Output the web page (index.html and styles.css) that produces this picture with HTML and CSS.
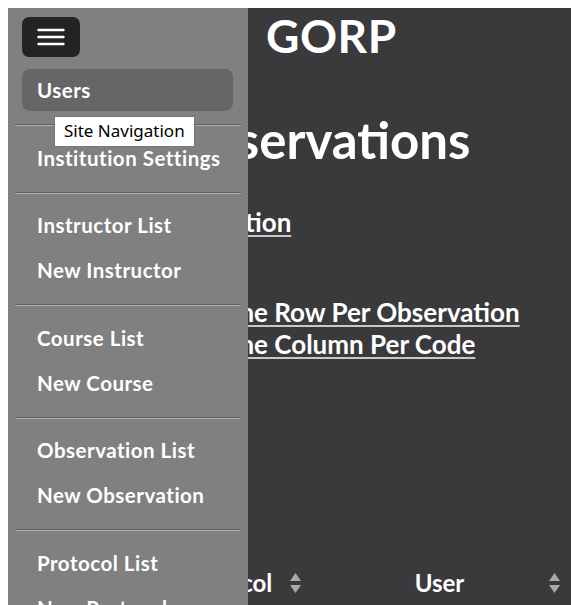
FILE: index.html
```html
<!DOCTYPE html>
<html lang="en">
<head>
<meta charset="utf-8">
<title>GORP - Observations</title>
<link rel="stylesheet" href="styles.css">
</head>
<body>
<div class="page">
  <header class="topbar">
    <span class="brand">GORP</span>
  </header>

  <main class="content">
    <h1 class="page-title">Observations</h1>
    <p class="new-link"><a href="#">New Observation</a></p>
    <ul class="exports">
      <li><a href="#">Export: One Row Per Observation</a></li>
      <li><a href="#">Export: One Column Per Code</a></li>
    </ul>
    <table class="obs-table">
      <thead>
        <tr>
          <th class="col-date">Date</th>
          <th class="col-protocol">Protocol <svg class="sort-icon" viewBox="0 0 11 20" width="11" height="20"><path d="M5.5 0L11 8H0Z"/><path d="M5.5 20L11 12H0Z"/></svg></th>
          <th class="col-user">User <svg class="sort-icon" viewBox="0 0 11 20" width="11" height="20"><path d="M5.5 0L11 8H0Z"/><path d="M5.5 20L11 12H0Z"/></svg></th>
        </tr>
      </thead>
    </table>
  </main>

  <aside class="sidebar">
    <button class="toggle" type="button" aria-label="Site Navigation">
      <svg viewBox="0 0 28 18" width="28" height="18"><path d="M1.5 2H26.5M1.5 9H26.5M1.5 16H26.5" stroke="#fff" stroke-width="2.4" stroke-linecap="round"/></svg>
    </button>
    <nav class="nav">
      <a class="nav-link active" href="#">Users</a>
      <hr>
      <a class="nav-link" href="#">Institution Settings</a>
      <hr>
      <a class="nav-link" href="#">Instructor List</a>
      <a class="nav-link" href="#">New Instructor</a>
      <hr>
      <a class="nav-link" href="#">Course List</a>
      <a class="nav-link" href="#">New Course</a>
      <hr>
      <a class="nav-link" href="#">Observation List</a>
      <a class="nav-link" href="#">New Observation</a>
      <hr>
      <a class="nav-link" href="#">Protocol List</a>
      <a class="nav-link" href="#">New Protocol</a>
    </nav>
    <div class="tooltip">Site Navigation</div>
  </aside>
</div>
</body>
</html>
```

FILE: styles.css
```css
html, body {
  height: 100%;
}

body {
  margin: 8px 0 0 8px;
  background: #ffffff;
  overflow: hidden;
  font-family: Lato, "Open Sans", sans-serif;
  color: #ffffff;
}

.page {
  position: relative;
  background: #3a3a3c;
  min-height: 700px;
}

/* top bar */
.topbar {
  height: 55px;
  padding-left: 258px;
  display: flex;
  align-items: center;
}

.brand {
  font-size: 46px;
  font-weight: 700;
  letter-spacing: 0.5px;
}

/* main column */
.content {
  padding-left: 80px;
}

.page-title {
  margin: 45px 0 0 79px;
  font-size: 51px;
  font-weight: 700;
  line-height: 64px;
}

.content a {
  color: #ffffff;
  text-decoration: underline;
  text-decoration-color: #c8c8c8;
  text-underline-offset: 3px;
}

.new-link {
  margin: 34.4px 0 0;
  font-size: 26px;
  font-weight: 700;
  line-height: 32px;
}

.exports {
  margin: 57.6px 0 0;
  padding-left: 40px;
  list-style: none;
  font-size: 26px;
  font-weight: 700;
  line-height: 32px;
}

.obs-table {
  margin-top: 204.8px;
  border-collapse: collapse;
  table-layout: fixed;
  width: 477px;
}

.obs-table th {
  position: relative;
  box-sizing: border-box;
  font-size: 24px;
  font-weight: 700;
  line-height: 28.8px;
  text-align: center;
  padding: 4px 30px;
}

.col-date {
  width: 60px;
}

.col-protocol {
  width: 158px;
}

.obs-table th.col-user {
  padding-left: 38px;
}

.sort-icon {
  position: absolute;
  right: 5px;
  top: 50%;
  margin-top: -10px;
  fill: #a9a9a9;
}

/* off-canvas navigation */
.sidebar {
  position: absolute;
  top: 0;
  left: 0;
  bottom: 0;
  width: 240px;
  background: #808080;
  padding-top: 9px;
  box-sizing: border-box;
}

.toggle {
  display: flex;
  align-items: center;
  justify-content: center;
  margin-left: 14px;
  width: 58px;
  height: 40px;
  border: 0;
  border-radius: 7px;
  background: #232323;
  padding: 0;
}

.nav {
  display: flex;
  flex-direction: column;
  margin-top: 12px;
}

.nav-link {
  display: block;
  margin: 0 15px 3px 14px;
  height: 42px;
  padding-left: 15px;
  line-height: 42px;
  border-radius: 8px;
  color: #ffffff;
  text-decoration: none;
  font-size: 20.5px;
  font-weight: 700;
  letter-spacing: 0.5px;
  white-space: nowrap;
}

.nav-link.active {
  background: #666666;
}

.nav hr {
  margin: 10px 7px 10.5px;
  height: 0;
  border: 0;
  border-top: 1px solid #5e5e5e;
  border-bottom: 1px solid #b0b0b0;
}

.tooltip {
  position: absolute;
  left: 46px;
  top: 108px;
  padding: 4px 9px 5px;
  background: #ffffff;
  border: 1px solid #767676;
  color: #000000;
  font-family: "Noto Sans", "Open Sans", sans-serif;
  font-size: 17px;
  line-height: 20px;
  white-space: nowrap;
}
```
